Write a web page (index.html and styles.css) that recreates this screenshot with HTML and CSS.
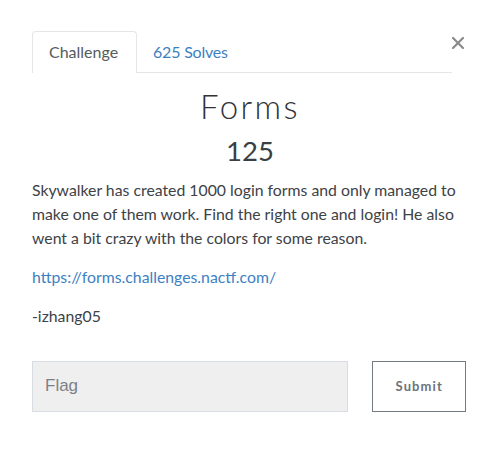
FILE: index.html
```html
<!DOCTYPE html>
<html>
<head>
<meta charset="utf-8">
<link rel="stylesheet" href="styles.css">
</head>
<body>
<div class="modal">
  <button class="close" aria-label="Close">
    <svg width="12" height="12" viewBox="0 0 12 12"><path d="M1 1L11 11M11 1L1 11" stroke="#8a8a8a" stroke-width="2.2" stroke-linecap="square"/></svg>
  </button>
  <ul class="tabs">
    <li class="tab active">Challenge</li>
    <li class="tab"><a href="#">625 Solves</a></li>
  </ul>
  <h3 class="title">Forms</h3>
  <h4 class="value">125</h4>
  <div class="desc">
    <p>Skywalker has created 1000 login forms and only managed to make one of them work. Find the right one and login! He also went a bit crazy with the colors for some reason.</p>
    <p><a href="#">https://forms.challenges.nactf.com/</a></p>
    <p>-izhang05</p>
  </div>
  <form class="submit-row">
    <input class="flag" type="text" placeholder="Flag">
    <button class="submit" type="button">Submit</button>
  </form>
</div>
</body>
</html>
```
FILE: styles.css
```css
html, body {
  margin: 0;
  padding: 0;
  background: #fff;
}
body {
  font-family: Lato, "Open Sans", sans-serif;
  color: #343a40;
}
.modal {
  position: relative;
  padding: 31px 30px 0 32px;
}
.close {
  position: absolute;
  top: 37px;
  left: 452px;
  padding: 0;
  border: 0;
  background: none;
  width: 12px;
  height: 12px;
  display: block;
}
.close svg { display: block; }
.tabs {
  list-style: none;
  margin: 0;
  padding: 0;
  display: flex;
  width: 420px;
  border-bottom: 1px solid #e3e7ea;
}
.tab {
  font-size: 16px;
  line-height: 24px;
  padding: 8px 16px;
  border: 1px solid transparent;
  border-bottom: 0;
  margin-bottom: -1px;
  border-radius: 4px 4px 0 0;
  color: #555b60;
}
.tab + .tab {
  padding-left: 15px;
}
.tab.active {
  border-color: #e3e7ea;
  background: #fff;
  padding-bottom: 9px;
  width: 71px;
}
.tab a {
  color: #3d7fc2;
  text-decoration: none;
  letter-spacing: -0.2px;
}
.title {
  margin: 14px 0 0;
  text-align: center;
  font-size: 33px;
  line-height: 1.2;
  font-weight: 300;
  color: #2f3337;
  letter-spacing: 2.4px;
  padding-left: 2px;
}
.value {
  margin: 7px 0 0;
  text-align: center;
  font-size: 27.5px;
  line-height: 1.2;
  font-weight: 400;
  color: #3a3f44;
  padding-left: 2px;
}
.desc {
  margin-top: 11px;
  width: 432px;
}
.desc p {
  margin: 0 0 15px;
  font-size: 15.8px;
  line-height: 24px;
  color: #3d4246;
}
.desc a {
  color: #3d7fc2;
  text-decoration: none;
}
.submit-row {
  display: flex;
  gap: 24px;
  margin: 33px 0 0;
}
.flag {
  box-sizing: border-box;
  width: 318px;
  height: 51px;
  margin: 0;
  padding: 0 12px;
  border: 1px solid #d7dde2;
  background: #efefef;
  font-family: "Liberation Sans", Arial, sans-serif;
  font-size: 17px;
  color: #495057;
  outline: none;
}
.flag::placeholder {
  color: #7d8185;
}
.submit {
  box-sizing: border-box;
  width: 94px;
  height: 51px;
  margin: 0;
  padding: 0;
  border: 1px solid #737a82;
  background: #fff;
  font-family: Lato, sans-serif;
  font-weight: 700;
  font-size: 13px;
  letter-spacing: 1.1px;
  color: #6c737a;
}
```
